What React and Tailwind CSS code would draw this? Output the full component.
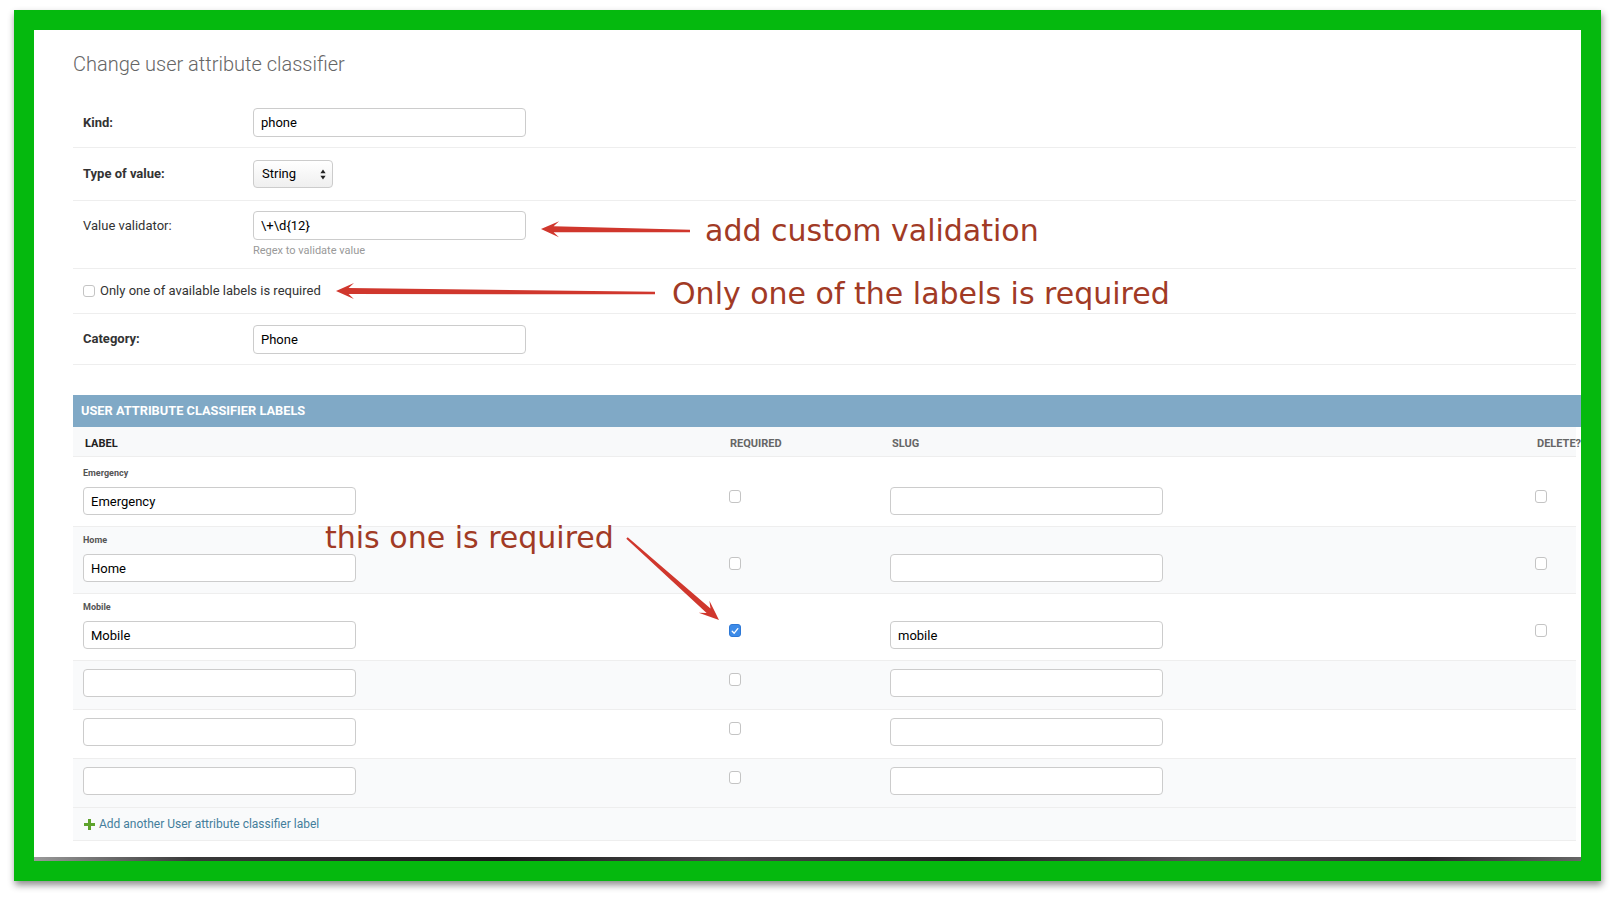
import React from "react";

// tapered "skitch" style arrow, from tail (x1,y1) to tip (x2,y2)
function arrowPoints(x1, y1, x2, y2, hl = 18, hw = 8, w1 = 6, w0 = 2.4) {
  const dx = x2 - x1;
  const dy = y2 - y1;
  const len = Math.hypot(dx, dy);
  const ux = dx / len;
  const uy = dy / len;
  const nx = -uy;
  const ny = ux;
  const p = (a, b) => `${a.toFixed(1)},${b.toFixed(1)}`;
  const bx = x2 - ux * hl;
  const by = y2 - uy * hl;
  const mx = x2 - ux * hl * 0.7;
  const my = y2 - uy * hl * 0.7;
  return [
    p(x2, y2),
    p(bx + nx * hw, by + ny * hw),
    p(mx + (nx * w1) / 2, my + (ny * w1) / 2),
    p(x1 + (nx * w0) / 2, y1 + (ny * w0) / 2),
    p(x1 - (nx * w0) / 2, y1 - (ny * w0) / 2),
    p(mx - (nx * w1) / 2, my - (ny * w1) / 2),
    p(bx - nx * hw, by - ny * hw),
  ].join(" ");
}

function CheckBox({ checked }) {
  if (checked) {
    return (
      <div className="w-[12px] h-[13px] rounded-[3px] bg-[#3d8be8] border border-[#2d78d6] flex items-center justify-center">
        <svg width="8" height="8" viewBox="0 0 8 8">
          <path d="M1.2 4.2 L3.2 6.2 L6.8 1.6" fill="none" stroke="white" strokeWidth="1.3" strokeLinecap="round" strokeLinejoin="round" />
        </svg>
      </div>
    );
  }
  return <div className="w-[12px] h-[13px] rounded-[3px] bg-white border border-[#c4c4c4]" />;
}

function TextBox({ value, className = "" }) {
  return (
    <input
      readOnly
      value={value}
      className={`w-[273px] border border-[#cccccc] rounded-[4px] bg-white pl-[7px] text-[13px] text-black outline-none ${className}`}
    />
  );
}

const labels = [
  { name: "Emergency", slug: "", required: false, pt: "pt-[9px]" },
  { name: "Home", slug: "", required: false, pt: "pt-[6px]" },
  { name: "Mobile", slug: "mobile", required: true, pt: "pt-[6px]" },
];

export default function App() {
  const rows = [
    ...labels.map((l) => ({ ...l, existing: true })),
    { name: "", slug: "", required: false, existing: false, pt: "pt-[8px]" },
    { name: "", slug: "", required: false, existing: false, pt: "pt-[8px]" },
    { name: "", slug: "", required: false, existing: false, pt: "pt-[8px]" },
  ];

  return (
    <div className="relative w-[1615px] h-[899px] bg-white overflow-hidden font-[Roboto,'Liberation_Sans',sans-serif]">
      <div className="pt-[10px] pl-[14px]">
        {/* green frame */}
        <div className="w-[1587px] h-[871px] bg-[#05b90e] p-[20px] shadow-[1px_4px_7px_rgba(0,0,0,0.45)]">
          <div className="w-full h-full bg-white overflow-hidden flex flex-col">
            <div className="pl-[39px] pt-[22px]">
              <h1 className="text-[20px] leading-[24px] font-light text-[#666]">Change user attribute classifier</h1>

              <div className="mt-[22px] w-[1503px]">
                <div className="h-[50px] flex items-center pl-[10px] border-b border-[#eeeeee]">
                  <div className="w-[170px] text-[13px] font-bold text-[#333]">Kind:</div>
                  <TextBox value="phone" className="h-[29px]" />
                </div>

                <div className="h-[53px] flex items-center pl-[10px] border-b border-[#eeeeee]">
                  <div className="w-[170px] text-[13px] font-bold text-[#333]">Type of value:</div>
                  <div className="w-[80px] h-[28px] border border-[#cccccc] rounded-[4px] bg-gradient-to-b from-white to-[#efefef] flex items-center justify-between pl-[8px] pr-[6px] text-[13px] text-black">
                    <span>String</span>
                    <svg width="6" height="11" viewBox="0 0 6 11">
                      <path d="M3 0.5 L5.6 4.3 H0.4 Z" fill="#222" />
                      <path d="M3 10.5 L5.6 6.7 H0.4 Z" fill="#222" />
                    </svg>
                  </div>
                </div>

                <div className="h-[68px] flex pt-[10px] pl-[10px] border-b border-[#eeeeee]">
                  <div className="w-[170px] h-[29px] flex items-center text-[13px] text-[#333]">Value validator:</div>
                  <div className="flex flex-col">
                    <TextBox value={"\\+\\d{12}"} className="h-[29px]" />
                    <div className="mt-[4px] text-[11px] leading-[14px] text-[#999]">Regex to validate value</div>
                  </div>
                </div>

                <div className="h-[45px] flex items-center gap-[5px] pl-[10px] border-b border-[#eeeeee]">
                  <div className="w-[12px] h-[12px] rounded-[3px] bg-white border border-[#c4c4c4]" />
                  <span className="text-[13px] text-[#333]">Only one of available labels is required</span>
                </div>

                <div className="h-[51px] flex items-center pl-[10px] border-b border-[#eeeeee]">
                  <div className="w-[170px] text-[13px] font-bold text-[#333]">Category:</div>
                  <TextBox value="Phone" className="h-[29px]" />
                </div>
              </div>

              {/* inline table */}
              <div className="mt-[30px]">
                <div className="h-[32px] flex items-center pl-[8px] bg-[#80a9c6] text-white text-[12.8px] font-bold uppercase">
                  User attribute classifier labels
                </div>
                <div className="w-[1503px]">
                  <div className="h-[30px] flex items-center pt-[6px] bg-[#f8f9fa] border-b border-[#eeeeee] text-[11px] font-bold uppercase">
                    <div className="w-[647px] shrink-0 pl-[12px] text-[#222]">Label</div>
                    <div className="w-[160px] shrink-0 pl-[10px] text-[#666]">Required</div>
                    <div className="w-[645px] shrink-0 pl-[12px] text-[#666]">Slug</div>
                    <div className="shrink-0 pl-[12px] text-[#666] whitespace-nowrap">Delete?</div>
                  </div>

                  {rows.map((row, i) => (
                    <div
                      key={i}
                      className={`flex ${row.pt} ${row.existing ? "pb-[11px]" : "pb-[12px]"} border-b border-[#eeeeee] ${i % 2 === 1 ? "bg-[#f9fafb]" : "bg-white"}`}
                    >
                      <div className="w-[647px] shrink-0 pl-[10px] flex flex-col">
                        {row.existing && (
                          <div className="h-[14px] leading-[14px] text-[9px] font-bold text-[#555] mb-[7px]">{row.name}</div>
                        )}
                        <TextBox value={row.name} className="h-[28px]" />
                      </div>
                      <div className={`w-[160px] shrink-0 pl-[9px] ${row.existing ? "pt-[24px]" : "pt-[4px]"}`}>
                        <CheckBox checked={row.required} />
                      </div>
                      <div className={`w-[645px] shrink-0 pl-[10px] ${row.existing ? "pt-[21px]" : ""}`}>
                        <TextBox value={row.slug} className="h-[28px]" />
                      </div>
                      <div className={`shrink-0 pl-[10px] ${row.existing ? "pt-[24px]" : "pt-[4px]"}`}>
                        {row.existing && <CheckBox />}
                      </div>
                    </div>
                  ))}

                  <div className="h-[33px] flex items-center gap-[4px] pl-[11px] bg-[#f9fafb] border-b border-[#eeeeee]">
                    <svg width="11" height="11" viewBox="0 0 11 11">
                      <path d="M4 0 H7 V4 H11 V7 H7 V11 H4 V7 H0 V4 H4 Z" fill="#5ea32c" />
                    </svg>
                    <span className="text-[12px] text-[#447e9b]">Add another User attribute classifier label</span>
                  </div>
                </div>
              </div>
            </div>
            <div className="mt-auto h-[4px] bg-[linear-gradient(90deg,#9a9a9a_0%,#3a3a3a_10%,#1c1c1c_30%,#4a4a4a_45%,#222_60%,#555_75%,#2a2a2a_90%,#666_100%)]" />
          </div>
        </div>
      </div>

      {/* annotations */}
      <svg className="absolute left-0 top-0 pointer-events-none" width="1615" height="899">
        <polygon points={arrowPoints(690, 231, 541, 229)} fill="#d0372d" />
        <polygon points={arrowPoints(655, 293, 336, 291)} fill="#d0372d" />
        <polygon points={arrowPoints(627, 538, 719, 620, 20, 8, 6, 2)} fill="#d0372d" />
      </svg>
      <div className="absolute left-[705px] top-[216px] text-[30px] leading-none text-[#a13a25] whitespace-nowrap font-['DejaVu_Sans',sans-serif]">
        add custom validation
      </div>
      <div className="absolute left-[672px] top-[279px] text-[30px] leading-none text-[#a13a25] whitespace-nowrap font-['DejaVu_Sans',sans-serif]">
        Only one of the labels is required
      </div>
      <div className="absolute left-[325px] top-[523px] text-[30px] leading-none text-[#a13a25] whitespace-nowrap font-['DejaVu_Sans',sans-serif]">
        this one is required
      </div>
    </div>
  );
}
